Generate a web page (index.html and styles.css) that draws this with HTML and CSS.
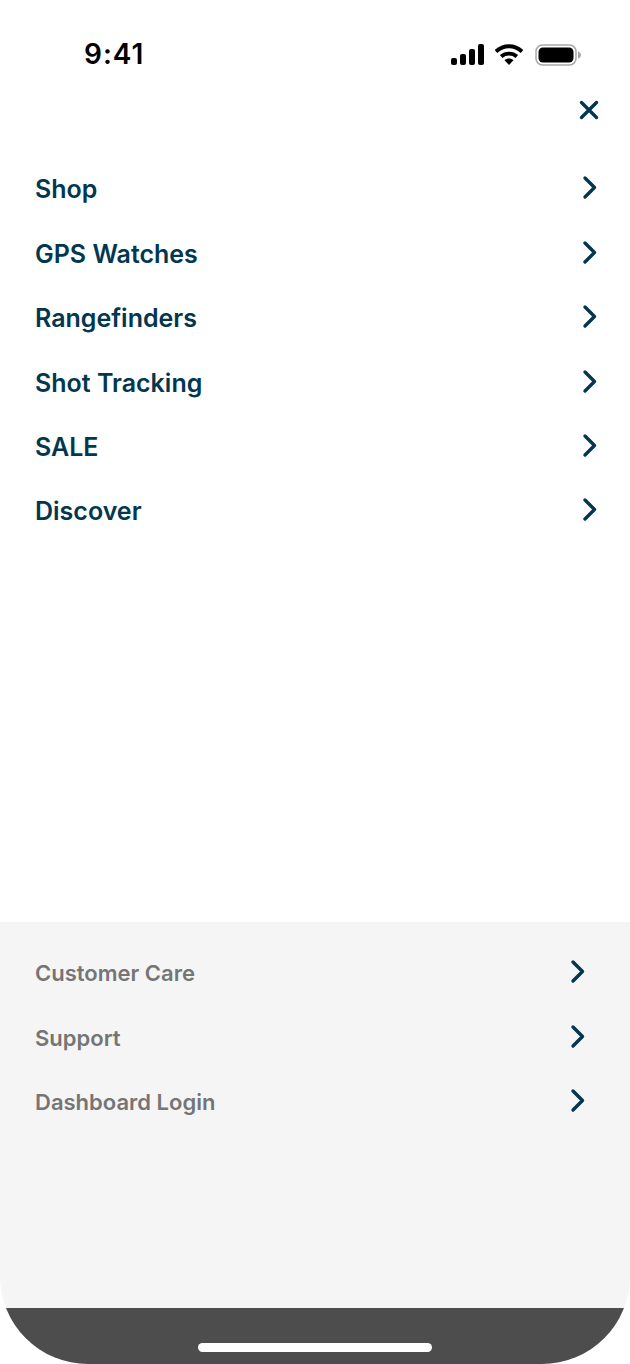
FILE: index.html
```html
<!DOCTYPE html>
<html lang="en">
<head>
    <meta charset="UTF-8">
    <meta name="viewport" content="width=device-width, initial-scale=1.0">
    <title>Menu</title>
    <link rel="stylesheet" href="styles.css">
</head>
<body>

<div class="screen">
    <div class="status-bar">
        <span class="time">9:41</span>
        <div class="status-icons">
            <svg class="signal" width="34" height="22" viewBox="0 0 34 22">
                <rect x="1" y="14" width="6" height="7" rx="2"/>
                <rect x="10" y="10" width="6" height="11" rx="2"/>
                <rect x="19" y="5" width="6" height="16" rx="2"/>
                <rect x="28" y="0" width="6" height="21" rx="2"/>
            </svg>
            <svg class="wifi" width="30" height="22" viewBox="0 0 30 22">
                <path d="M2 7.5C9.500 0.500 20.500 0.500 28 7.500" fill="none" stroke="#000" stroke-width="3.800"/>
                <path d="M7.200 12.500C11.500 8.600 18.500 8.600 22.800 12.500" fill="none" stroke="#000" stroke-width="3.800"/>
                <path d="M10.500 16.200C13 14 17 14 19.500 16.200L15 21Z"/>
            </svg>
            <svg class="battery" width="48" height="22" viewBox="0 0 48 22">
                <rect x="2" y="1" width="40" height="20" rx="6.500" fill="none" stroke="#a8a8a8" stroke-width="1.500"/>
                <rect x="4.500" y="3.500" width="35" height="15" rx="4.500"/>
                <path d="M44 7.500C46 8 47 9.500 47 11C47 12.500 46 14 44 14.500Z" fill="#a8a8a8"/>
            </svg>
        </div>
    </div>

    <div class="close-row">
        <svg width="24" height="24" viewBox="0 0 24 24">
            <path class="icon-line" d="M4.500 4.500L19.500 19.500M19.500 4.500L4.500 19.500"/>
        </svg>
    </div>

    <nav class="main-menu">
        <a class="menu-row" href="#shop"><span>Shop</span><svg class="chevron" width="18" height="26" viewBox="0 0 18 26"><path class="icon-line" d="M6 3L15.500 12.500L6 22"/></svg></a>
        <a class="menu-row" href="#gps"><span>GPS Watches</span><svg class="chevron" width="18" height="26" viewBox="0 0 18 26"><path class="icon-line" d="M6 3L15.500 12.500L6 22"/></svg></a>
        <a class="menu-row" href="#rangefinders"><span>Rangefinders</span><svg class="chevron" width="18" height="26" viewBox="0 0 18 26"><path class="icon-line" d="M6 3L15.500 12.500L6 22"/></svg></a>
        <a class="menu-row" href="#tracking"><span>Shot Tracking</span><svg class="chevron" width="18" height="26" viewBox="0 0 18 26"><path class="icon-line" d="M6 3L15.500 12.500L6 22"/></svg></a>
        <a class="menu-row" href="#sale"><span>SALE</span><svg class="chevron" width="18" height="26" viewBox="0 0 18 26"><path class="icon-line" d="M6 3L15.500 12.500L6 22"/></svg></a>
        <a class="menu-row" href="#discover"><span>Discover</span><svg class="chevron" width="18" height="26" viewBox="0 0 18 26"><path class="icon-line" d="M6 3L15.500 12.500L6 22"/></svg></a>
    </nav>

    <nav class="care-menu">
        <a class="menu-row" href="#care"><span>Customer Care</span><svg class="chevron" width="18" height="26" viewBox="0 0 18 26"><path class="icon-line" d="M6 3L15.500 12.500L6 22"/></svg></a>
        <a class="menu-row" href="#support"><span>Support</span><svg class="chevron" width="18" height="26" viewBox="0 0 18 26"><path class="icon-line" d="M6 3L15.500 12.500L6 22"/></svg></a>
        <a class="menu-row" href="#login"><span>Dashboard Login</span><svg class="chevron" width="18" height="26" viewBox="0 0 18 26"><path class="icon-line" d="M6 3L15.500 12.500L6 22"/></svg></a>
    </nav>

    <div class="home-bar">
        <div class="home-indicator"></div>
    </div>
</div>

</body>
</html>
```

FILE: styles.css
```css
body {
    margin: 0;
    padding: 0;
    background-color: #fff;
    font-family: Inter, "Liberation Sans", sans-serif;
}
.screen {
    width: 630px;
    height: 1364px;
    display: flex;
    flex-direction: column;
    overflow: hidden;
    background-color: #fff;
    border-radius: 0 0 88px 88px;
}
.status-bar {
    height: 90px;
    flex-shrink: 0;
    display: flex;
    justify-content: space-between;
    align-items: flex-start;
    padding: 0 48px 0 84px;
    box-sizing: border-box;
}
.time {
    margin-top: 37px;
    font-size: 28px;
    line-height: 34px;
    font-weight: 600;
    letter-spacing: 1px;
    color: #000;
}
.status-icons {
    display: flex;
    gap: 10px;
    margin-top: 44px;
}
.close-row {
    height: 40px;
    flex-shrink: 0;
    display: flex;
    justify-content: flex-end;
    align-items: center;
    padding-right: 29.5px;
}
.icon-line {
    fill: none;
    stroke: #03374f;
    stroke-width: 3.4;
    stroke-linecap: round;
    stroke-linejoin: round;
}
.main-menu {
    flex: 1;
    padding: 27.3px 33px 0 35px;
}
.menu-row {
    height: 64.4px;
    display: flex;
    justify-content: space-between;
    align-items: center;
    text-decoration: none;
    color: #03374f;
    font-size: 25px;
    font-weight: 600;
}
.chevron {
    margin-bottom: 2px;
}
.care-menu {
    height: 386px;
    flex-shrink: 0;
    box-sizing: border-box;
    padding: 19px 45px 0 35px;
    background-color: #f5f5f5;
}
.care-menu .menu-row {
    color: #757575;
    font-size: 22px;
}
.home-bar {
    height: 56px;
    flex-shrink: 0;
    display: flex;
    justify-content: center;
    background-color: #4d4d4d;
}
.home-indicator {
    width: 234px;
    height: 9px;
    margin: 35px 0 0 0;
    border-radius: 5px;
    background-color: #fff;
}
```
